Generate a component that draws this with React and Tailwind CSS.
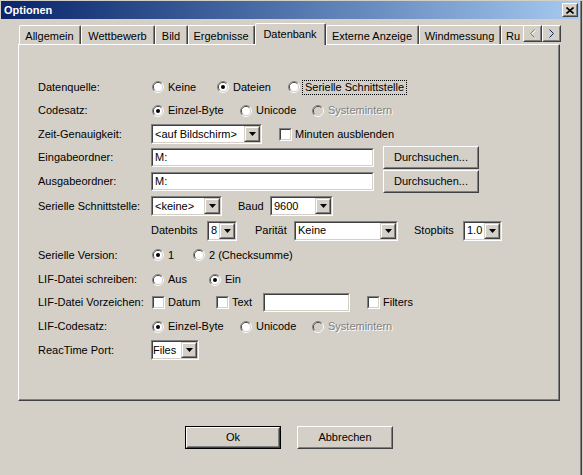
import React from 'react';

// classic 3D edges
const sunkenOuter = 'border border-t-[#808080] border-l-[#808080] border-b-white border-r-white';
const sunkenInner = 'border border-t-[#404040] border-l-[#404040] border-b-[#d4d0c8] border-r-[#d4d0c8]';
const raisedOuter = 'border border-t-white border-l-white border-b-[#404040] border-r-[#404040]';
const raisedInner = 'border border-t-[#d4d0c8] border-l-[#d4d0c8] border-b-[#808080] border-r-[#808080]';
const comboOuter = 'border border-t-[#d4d0c8] border-l-[#d4d0c8] border-b-[#404040] border-r-[#404040]';
const comboInner = 'border border-t-white border-l-white border-b-[#808080] border-r-[#808080]';

const arc = (r, half) => {
    const d = r * 0.7071;
    const a = [6 - d, 6 + d];
    const b = [6 + d, 6 - d];
    return half === 'tl'
        ? `M${a[0]} ${a[1]}A${r} ${r} 0 0 1 ${b[0]} ${b[1]}`
        : `M${b[0]} ${b[1]}A${r} ${r} 0 0 1 ${a[0]} ${a[1]}`;
};

const Radio = ({ label, checked, disabled, focus, className = '' }) => (
    <div className={`flex items-center shrink-0 ${className}`}>
        <svg width="13" height="12" viewBox="-1 0 13 12" className="shrink-0">
            <path d={arc(5.5, 'tl')} stroke="#808080" fill="none" />
            <path d={arc(5.5, 'br')} stroke="#ffffff" fill="none" />
            <path d={arc(4.5, 'tl')} stroke="#404040" fill="none" />
            <path d={arc(4.5, 'br')} stroke="#d4d0c8" fill="none" />
            <circle cx="6" cy="6" r="4" fill={disabled ? '#d4d0c8' : '#ffffff'} />
            {checked && <circle cx="6" cy="6" r="2" fill="#000000" />}
        </svg>
        <span
            className={`ml-[4px] whitespace-nowrap ${disabled ? 'text-[#808080] [text-shadow:1px_1px_0_#fff]' : ''} ${focus ? 'outline-1 outline-dotted outline-black outline-offset-[1px] px-px -ml-px' : ''}`}
        >
            {label}
        </span>
    </div>
);

const Checkbox = ({ label, className = '' }) => (
    <div className={`flex items-center shrink-0 ${className}`}>
        <div className={`w-[13px] h-[13px] shrink-0 ${sunkenOuter}`}>
            <div className={`w-full h-full bg-white ${sunkenInner}`} />
        </div>
        <span className="ml-[3px] whitespace-nowrap">{label}</span>
    </div>
);

const Field = ({ value, className = '' }) => (
    <div className={`shrink-0 ${sunkenOuter} ${className}`}>
        <div className={`w-full h-full bg-white flex items-center pl-[2px] ${sunkenInner}`}>{value}</div>
    </div>
);

const Select = ({ value, className = '', pad = 'pl-[2px]' }) => (
    <div className={`shrink-0 h-[20px] ${sunkenOuter} ${className}`}>
        <div className={`w-full h-full bg-white flex ${sunkenInner}`}>
            <div className={`flex-1 flex items-center whitespace-nowrap overflow-hidden ${pad}`}>{value}</div>
            <div className={`w-[16px] h-full shrink-0 ${comboOuter}`}>
                <div className={`w-full h-full bg-[#d4d0c8] flex items-center justify-center ${comboInner}`}>
                    <svg width="7" height="4" viewBox="0 0 7 4">
                        <path d="M0 0h7L3.5 4z" fill="#000" />
                    </svg>
                </div>
            </div>
        </div>
    </div>
);

const Button = ({ label, isDefault, className = '' }) => (
    <div className={`shrink-0 ${isDefault ? 'border border-black' : ''} ${className}`}>
        <div className={`w-full h-full ${raisedOuter}`}>
            <div className={`w-full h-full flex items-center justify-center ${raisedInner}`}>{label}</div>
        </div>
    </div>
);

const Row = ({ label, h, children }) => (
    <div className={`flex items-center ${h}`}>
        <div className="w-[113px] shrink-0 whitespace-nowrap">{label}</div>
        {children}
    </div>
);

const tabs = [
    ['Allgemein', 'w-[62px]'],
    ['Wettbewerb', 'w-[74px]'],
    ['Bild', 'w-[33px]'],
    ['Ergebnisse', 'w-[67px]'],
    ['Datenbank', 'w-[71px]', true],
    ['Externe Anzeige', 'w-[93px]'],
    ['Windmessung', 'w-[82px]'],
];

const Tab = ({ label, w, active, align = 'justify-center' }) => (
    <div
        className={`shrink-0 ${w} ${active ? 'h-[22px] bg-[#d4d0c8] relative z-10' : 'h-[19px] mb-px'} border-t border-l border-r border-t-white border-l-white border-r-[#404040] rounded-t-[2px]`}
    >
        <div className={`h-full flex ${align} border-r border-r-[#808080] pt-[5px]`}>
            <span className="whitespace-nowrap">{label}</span>
        </div>
    </div>
);

const ScrollBtn = ({ dir }) => (
    <div className={`w-[19px] h-[17px] shrink-0 ${raisedOuter}`}>
        <div className={`w-full h-full flex items-center justify-center ${raisedInner}`}>
            {dir === 'left' ? (
                <svg width="7" height="10" viewBox="0 0 7 10">
                    <path d="M5.5 0.5L1.5 4.5L5.5 8.5" stroke="#ffffff" fill="none" transform="translate(1 1)" />
                    <path d="M5.5 0.5L1.5 4.5L5.5 8.5" stroke="#808080" fill="none" />
                </svg>
            ) : (
                <svg width="6" height="9" viewBox="0 0 6 9">
                    <path d="M0.5 0.5L4.5 4.5L0.5 8.5" stroke="#0a246a" fill="none" />
                </svg>
            )}
        </div>
    </div>
);

export default function App() {
    return (
        <div className="w-[583px] h-[475px] bg-[#d4d0c8] overflow-hidden font-['Liberation_Sans',Arial,sans-serif] text-[11px] leading-none text-black">
            <div className="w-[582px] h-full border-r border-r-[#404040]">
                <div className="h-full border-r border-r-[#808080]">
                    {/* title bar */}
                    <div className="mt-px ml-px mr-px h-[18px] bg-linear-to-r from-[#0a246a] to-[#a6caf0] flex items-center justify-between pl-[3px] pr-[1px]">
                        <span className="text-white font-bold">Optionen</span>
                        <div className={`w-[16px] h-[14px] ${raisedOuter}`}>
                            <div className={`w-full h-full bg-[#d4d0c8] flex items-center justify-center ${raisedInner}`}>
                                <svg width="8" height="7" viewBox="0 0 8 7">
                                    <path d="M0.5 0.5L7.5 6.5M7.5 0.5L0.5 6.5" stroke="#000" strokeWidth="1.6" />
                                </svg>
                            </div>
                        </div>
                    </div>

                    {/* tab strip */}
                    <div className="mt-[4px] ml-[19px] flex h-[22px] relative z-10">
                        <div className="w-[504px] h-full flex items-end">
                            {tabs.map(([label, w, active]) => (
                                <Tab key={label} label={label} w={w} active={active} />
                            ))}
                            <div className="shrink-0 w-[22px] h-[19px] mb-px border-t border-l border-t-white border-l-white rounded-tl-[2px] pt-[5px] pl-[4px]">
                                <span className="whitespace-nowrap">Ru</span>
                            </div>
                        </div>
                        <div className="flex mt-[2px] h-[17px]">
                            <ScrollBtn dir="left" />
                            <ScrollBtn dir="right" />
                        </div>
                    </div>

                    {/* page */}
                    <div className="-mt-px ml-[18px] w-[542px] h-[357px] border border-t-white border-l-white border-b-[#404040] border-r-[#404040]">
                        <div className="h-full border-b border-r border-b-[#808080] border-r-[#808080] pl-[19px] pt-[30px]">
                            <Row label="Datenquelle:" h="h-[24px]">
                                <Radio label="Keine" className="w-[65px]" />
                                <Radio label="Dateien" checked className="w-[71px]" />
                                <Radio label="Serielle Schnittstelle" focus />
                            </Row>
                            <Row label="Codesatz:" h="h-[23px]">
                                <Radio label="Einzel-Byte" checked className="w-[88px]" />
                                <Radio label="Unicode" className="w-[72px]" />
                                <Radio label="Systemintern" disabled />
                            </Row>
                            <Row label="Zeit-Genauigkeit:" h="h-[24px]">
                                <Select value="<auf Bildschirm>" className="w-[111px]" />
                                <Checkbox label="Minuten ausblenden" className="ml-[17px]" />
                            </Row>
                            <Row label="Eingabeordner:" h="h-[22px]">
                                <Field value="M:" className="w-[223px] h-[19px]" />
                                <Button label="Durchsuchen..." className="ml-[9px] w-[96px] h-[23px]" />
                            </Row>
                            <Row label="Ausgabeordner:" h="h-[26px]">
                                <Field value="M:" className="w-[223px] h-[19px]" />
                                <Button label="Durchsuchen..." className="ml-[9px] w-[96px] h-[23px]" />
                            </Row>
                            <Row label="Serielle Schnittstelle:" h="h-[24px]">
                                <Select value="<keine>" className="w-[71px]" />
                                <span className="ml-[16px] w-[32px] shrink-0">Baud</span>
                                <Select value="9600" className="w-[63px]" />
                            </Row>
                            <Row label="" h="h-[25px]">
                                <span className="w-[56px] shrink-0">Datenbits</span>
                                <Select value="8" className="w-[30px]" />
                                <span className="ml-[18px] w-[39px] shrink-0">Parität</span>
                                <Select value="Keine" className="w-[104px]" />
                                <span className="ml-[16px] w-[49px] shrink-0">Stopbits</span>
                                <Select value="1.0" className="w-[39px]" />
                            </Row>
                            <Row label="Serielle Version:" h="h-[24px]">
                                <Radio label="1" checked className="w-[41px]" />
                                <Radio label="2 (Checksumme)" />
                            </Row>
                            <Row label="LIF-Datei schreiben:" h="h-[25px]">
                                <Radio label="Aus" className="w-[57px]" />
                                <Radio label="Ein" checked />
                            </Row>
                            <Row label="LIF-Datei Vorzeichen:" h="h-[20px]">
                                <Checkbox label="Datum" className="ml-px w-[64px]" />
                                <Checkbox label="Text" className="w-[47px]" />
                                <Field value="" className="w-[87px] h-[19px]" />
                                <Checkbox label="Filters" className="ml-[17px]" />
                            </Row>
                            <Row label="LIF-Codesatz:" h="h-[29px]">
                                <Radio label="Einzel-Byte" checked className="w-[88px]" />
                                <Radio label="Unicode" className="w-[72px]" />
                                <Radio label="Systemintern" disabled />
                            </Row>
                            <Row label="ReacTime Port:" h="h-[18px]">
                                <Select value="Files" className="w-[48px]" pad="pl-0" />
                            </Row>
                        </div>
                    </div>

                    {/* dialog buttons */}
                    <div className="flex mt-[25px] ml-[185px]">
                        <Button label="Ok" isDefault className="w-[96px] h-[23px]" />
                        <Button label="Abbrechen" className="ml-[16px] w-[96px] h-[23px]" />
                    </div>
                </div>
            </div>
        </div>
    );
}
